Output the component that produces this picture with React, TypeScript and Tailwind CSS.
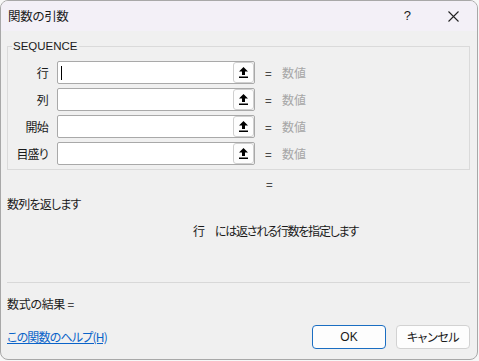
import React from "react";

const rows = ["行", "列", "開始", "目盛り"];

const font = "font-['Noto_Sans_CJK_JP','Noto_Sans',sans-serif] [font-feature-settings:'palt']";

function RefIcon() {
  return (
    <svg width="9" height="11" viewBox="0 0 9 11">
      <path d="M4.5 0 L9 4.5 L6 4.5 L6 8 L3 8 L3 4.5 L0 4.5 Z" fill="#000" />
      <rect x="0" y="9.5" width="9" height="1.5" fill="#000" />
    </svg>
  );
}

function ArgRow({ label, first }: { label: string; first: boolean }) {
  return (
    <div className="flex h-[23px] items-center">
      <div className="w-[38px] text-right tracking-[-0.8px]">{label}</div>
      <div className="ml-[9px] flex h-[23px] w-[198px] items-center rounded-[2px] border border-[#a9a9a9] bg-white">
        <div className="flex flex-1 items-center pl-[3px]">
          {first && <div className="h-[14px] w-px bg-black" />}
        </div>
        <div className="flex h-[21px] w-[21px] items-center justify-center rounded-[3px] border border-[#cfcfcf] bg-[#fdfdfd]">
          <RefIcon />
        </div>
      </div>
      <div className="ml-[10px] w-[10px]">=</div>
      <div className="ml-[7px] text-[#a6a6a6]">数値</div>
    </div>
  );
}

export default function App() {
  return (
    <div className={`h-[361px] w-[479px] bg-[#f7f7f7] text-[12px] leading-[16px] text-[#1a1a1a] ${font}`}>
      <div className="flex h-[360px] w-[478px] flex-col overflow-hidden rounded-[8px] border border-[#a8a8a8] bg-[#f0f0f0]">
        {/* title bar */}
        <div className="flex h-[30px] shrink-0 items-center bg-[#f3f0f7] pl-[7px] pr-[18px]">
          <span className="text-[12.5px] tracking-[-0.3px]">関数の引数</span>
          <span className="ml-auto font-['Liberation_Sans',sans-serif] text-[13px]">?</span>
          <svg className="ml-[37px]" width="11" height="11" viewBox="0 0 11 11">
            <path d="M0.5 0.5 L10.5 10.5 M10.5 0.5 L0.5 10.5" stroke="#222" strokeWidth="1.1" />
          </svg>
        </div>

        {/* body */}
        <div className="flex flex-1 flex-col pl-[6px] pr-[7px]">
          <fieldset className="mt-[8px] border border-[#dadada] pb-[4px] pl-[2px] pt-[8px]">
            <legend className="ml-[2px] px-[1px] font-['Liberation_Sans',sans-serif] text-[11.5px] leading-[14px]">
              SEQUENCE
            </legend>
            <div className="flex flex-col gap-[4px]">
              {rows.map((r, i) => (
                <ArgRow key={r} label={r} first={i === 0} />
              ))}
            </div>
          </fieldset>

          <div className="mt-[6px] pl-[259px]">=</div>
          <div className="mt-[4px] tracking-[-0.8px]">数列を返します</div>
          <div className="mt-[11px] flex pl-[186px] tracking-[-1.2px]">
            <span>行</span>
            <span className="ml-[11px]">には返される行数を指定します</span>
          </div>

          <div className="mt-[43px] h-px bg-[#d8d8d8]" />

          <div className="mt-[13px] tracking-[-0.3px]">数式の結果 =</div>

          <div className="mt-[13px] flex items-center">
            <a className="tracking-[-0.8px] text-[#0a63c9] underline">この関数のヘルプ(H)</a>
            <button className="ml-auto h-[24px] w-[74px] rounded-[4px] border border-[#1b6ec2] bg-[#fdfdfd] font-['Liberation_Sans',sans-serif] text-[12px]">
              OK
            </button>
            <button className="ml-[10px] h-[24px] w-[74px] rounded-[4px] border border-[#d2d2d2] bg-[#fdfdfd] text-[12px] tracking-[-0.4px]">
              キャンセル
            </button>
          </div>
        </div>
      </div>
    </div>
  );
}
